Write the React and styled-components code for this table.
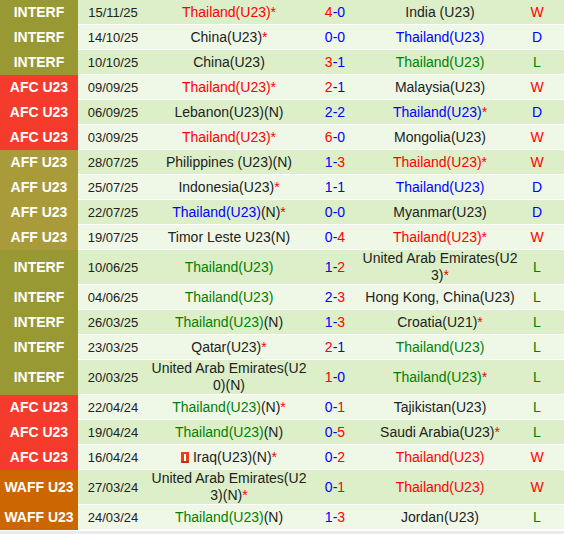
import React from "react";
import styled, { createGlobalStyle } from "styled-components";

const GlobalStyle = createGlobalStyle`
  html, body {
    margin: 0;
    padding: 0;
    background: #ffffff;
  }
  body {
    font-family: "Liberation Sans", Arial, sans-serif;
  }
`;

const colors = {
  k: "#222222",
  r: "#ff0000",
  b: "#0000ff",
  g: "#008000",
};

const compColors = {
  "INTERF": "#999933",
  "AFC U23": "#f43b2c",
  "AFF U23": "#a99b39",
  "WAFF U23": "#cc6600",
};

const resultColors = { W: colors.r, D: colors.b, L: colors.g };

const Table = styled.div`
  width: 564px;
  display: flex;
  flex-direction: column;
`;

const Row = styled.div`
  display: grid;
  grid-template-columns: 78px 70px 162px 50px 160px 1fr;
  min-height: 25px;
  background: ${props => (props.odd ? "#eff8e6" : "#dcefc9")};
  border-bottom: 1px solid #ffffff;
  box-sizing: border-box;
  line-height: 17px;
`;

const Cell = styled.div`
  display: flex;
  align-items: center;
  justify-content: center;
  text-align: center;
  padding: 0;
  font-size: 14px;
  color: ${colors.k};
`;

const CompCell = styled(Cell)`
  background: ${props => props.bg};
  color: #ffffff;
  font-weight: bold;
  font-size: 14px;
  margin-bottom: -1px;
`;

const DateCell = styled(Cell)`
  font-size: 13px;
`;

const TeamCell = styled(Cell)`
  padding: 0 ${props => (props.home ? "1px" : "0")};
  word-break: break-all;
`;

const TeamText = styled.span`
  display: inline;
`;

const Part = styled.span`
  color: ${props => colors[props.c]};
`;

const ScoreCell = styled(Cell)`
  color: ${colors.b};
`;

const Goal = styled.span`
  color: ${props => (props.win ? colors.r : colors.b)};
`;

const ResultCell = styled(Cell)`
  padding-right: 10px;
  color: ${props => resultColors[props.r]};
`;

const FlagIcon = styled.svg`
  width: 8px;
  height: 11px;
  margin-right: 4px;
  vertical-align: -1px;
`;

const Footer = styled.div`
  height: 3px;
  margin-top: 1px;
  background: #ebebeb;
`;

function IraqFlag() {
  return (
    <FlagIcon viewBox="0 0 8 11">
      <rect x="0" y="0" width="8" height="11" fill="#e8401c" />
      <rect x="3" y="2" width="2" height="7" fill="#ffffff" />
      <rect x="0" y="9" width="8" height="2" fill="#c23010" />
    </FlagIcon>
  );
}

const matches = [
  ["INTERF", "15/11/25", [["Thailand(U23)*", "r"]], [4, 0], [["India (U23)", "k"]], "W"],
  ["INTERF", "14/10/25", [["China(U23)", "k"], ["*", "r"]], [0, 0], [["Thailand(U23)", "b"]], "D"],
  ["INTERF", "10/10/25", [["China(U23)", "k"]], [3, 1], [["Thailand(U23)", "g"]], "L"],
  ["AFC U23", "09/09/25", [["Thailand(U23)*", "r"]], [2, 1], [["Malaysia(U23)", "k"]], "W"],
  ["AFC U23", "06/09/25", [["Lebanon(U23)(N)", "k"]], [2, 2], [["Thailand(U23)", "b"], ["*", "r"]], "D"],
  ["AFC U23", "03/09/25", [["Thailand(U23)*", "r"]], [6, 0], [["Mongolia(U23)", "k"]], "W"],
  ["AFF U23", "28/07/25", [["Philippines (U23)(N)", "k"]], [1, 3], [["Thailand(U23)*", "r"]], "W"],
  ["AFF U23", "25/07/25", [["Indonesia(U23)", "k"], ["*", "r"]], [1, 1], [["Thailand(U23)", "b"]], "D"],
  ["AFF U23", "22/07/25", [["Thailand(U23)", "b"], ["(N)", "k"], ["*", "r"]], [0, 0], [["Myanmar(U23)", "k"]], "D"],
  ["AFF U23", "19/07/25", [["Timor Leste U23(N)", "k"]], [0, 4], [["Thailand(U23)*", "r"]], "W"],
  ["INTERF", "10/06/25", [["Thailand(U23)", "g"]], [1, 2], [["United Arab Emirates(U23)", "k"], ["*", "r"]], "L"],
  ["INTERF", "04/06/25", [["Thailand(U23)", "g"]], [2, 3], [["Hong Kong, China(U23)", "k"]], "L"],
  ["INTERF", "26/03/25", [["Thailand(U23)", "g"], ["(N)", "k"]], [1, 3], [["Croatia(U21)", "k"], ["*", "r"]], "L"],
  ["INTERF", "23/03/25", [["Qatar(U23)", "k"], ["*", "r"]], [2, 1], [["Thailand(U23)", "g"]], "L"],
  ["INTERF", "20/03/25", [["United Arab Emirates(U20)(N)", "k"]], [1, 0], [["Thailand(U23)", "g"], ["*", "r"]], "L"],
  ["AFC U23", "22/04/24", [["Thailand(U23)", "g"], ["(N)", "k"], ["*", "r"]], [0, 1], [["Tajikistan(U23)", "k"]], "L"],
  ["AFC U23", "19/04/24", [["Thailand(U23)", "g"], ["(N)", "k"]], [0, 5], [["Saudi Arabia(U23)", "k"], ["*", "r"]], "L"],
  ["AFC U23", "16/04/24", [["Iraq(U23)(N)", "k"], ["*", "r"]], [0, 2], [["Thailand(U23)", "r"]], "W", true],
  ["WAFF U23", "27/03/24", [["United Arab Emirates(U23)(N)", "k"], ["*", "r"]], [0, 1], [["Thailand(U23)", "r"]], "W"],
  ["WAFF U23", "24/03/24", [["Thailand(U23)", "g"], ["(N)", "k"]], [1, 3], [["Jordan(U23)", "k"]], "L"],
];

function Team({ parts, flag }) {
  return (
    <TeamText>
      {flag && <IraqFlag />}
      {parts.map(([t, c], i) => (
        <Part key={i} c={c}>{t}</Part>
      ))}
    </TeamText>
  );
}

export default function App() {
  return (
    <>
      <GlobalStyle />
      <Table>
        {matches.map(([comp, date, home, score, away, res, flag], i) => (
          <Row key={i} odd={i % 2 === 1}>
            <CompCell bg={compColors[comp]}>{comp}</CompCell>
            <DateCell>{date}</DateCell>
            <TeamCell home>
              <Team parts={home} flag={flag} />
            </TeamCell>
            <ScoreCell>
              <Goal win={score[0] > score[1]}>{score[0]}</Goal>-
              <Goal win={score[1] > score[0]}>{score[1]}</Goal>
            </ScoreCell>
            <TeamCell>
              <Team parts={away} />
            </TeamCell>
            <ResultCell r={res}>{res}</ResultCell>
          </Row>
        ))}
      </Table>
      <Footer />
    </>
  );
}
